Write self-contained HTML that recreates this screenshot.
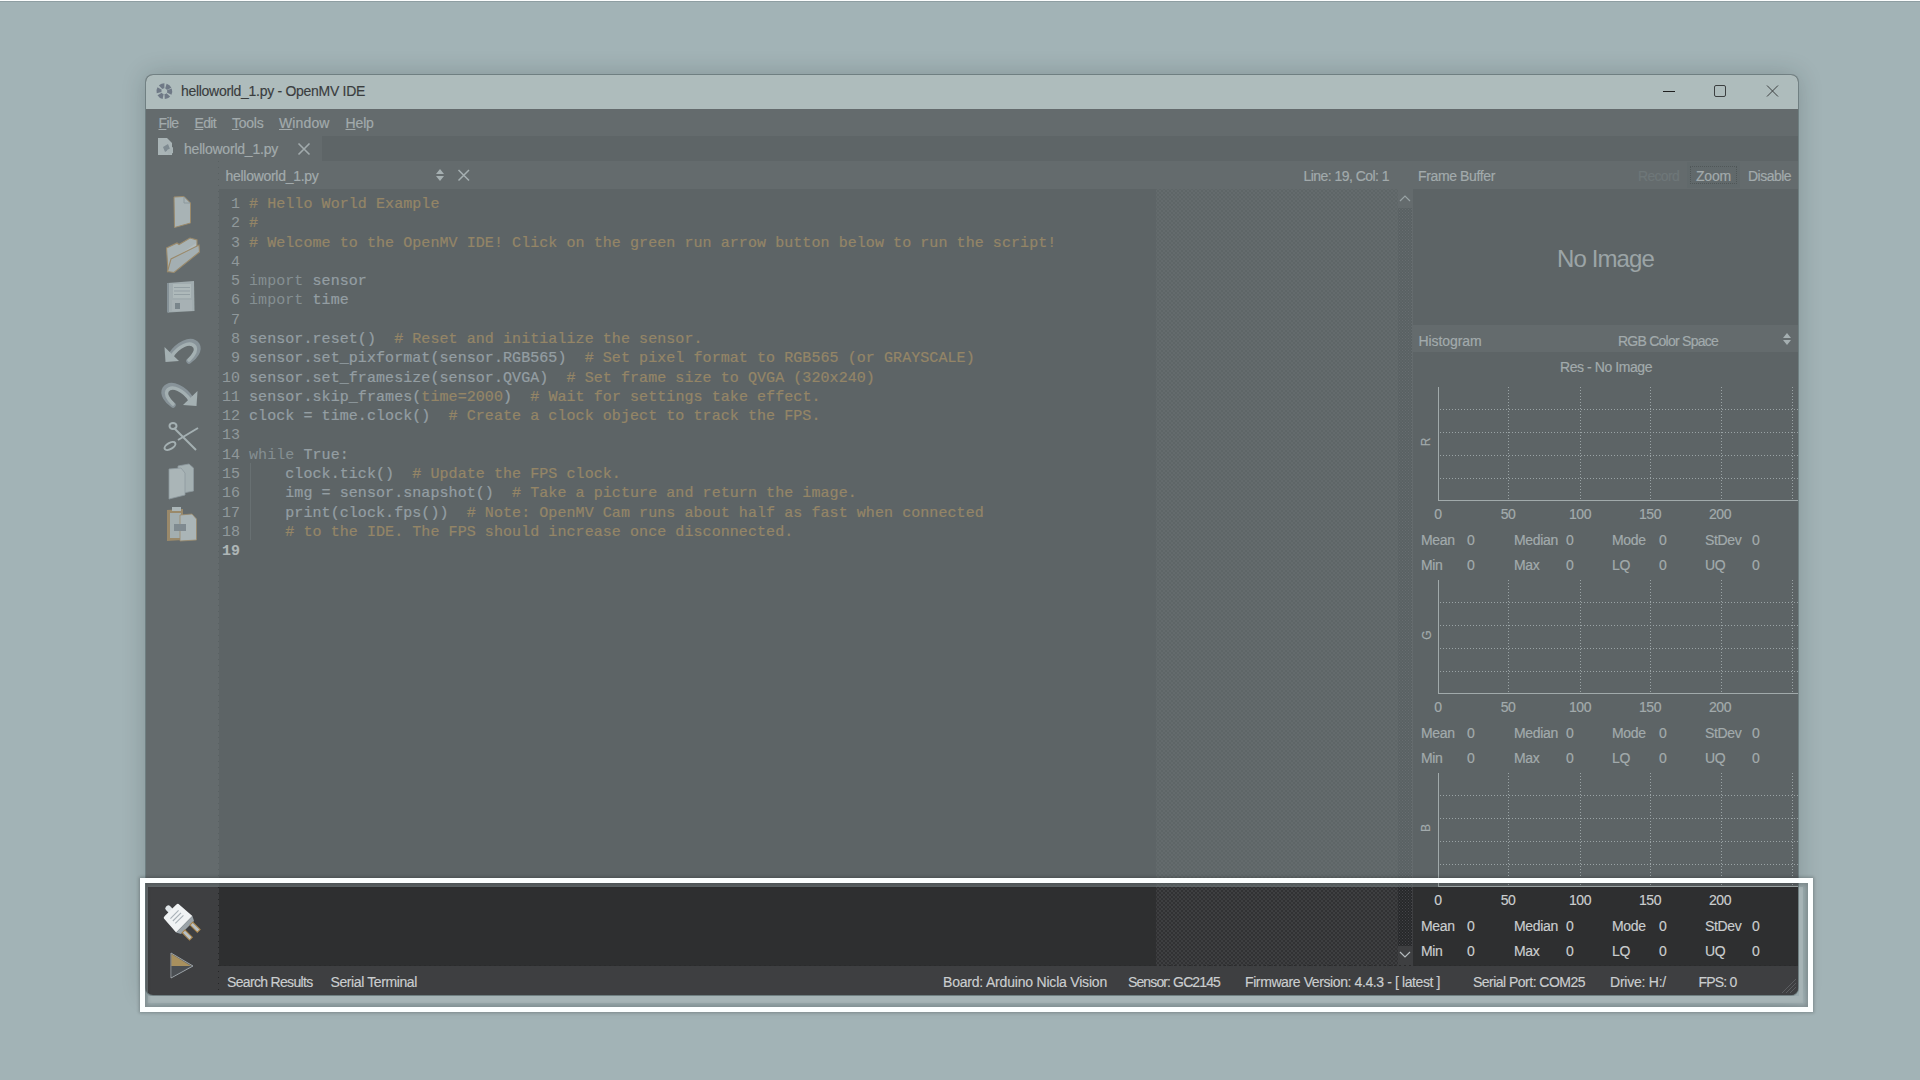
<!DOCTYPE html>
<html><head><meta charset="utf-8">
<style>
*{margin:0;padding:0;box-sizing:border-box}
html,body{width:1920px;height:1080px;overflow:hidden}
body{background:#a2b3b6;font-family:"Liberation Sans",sans-serif;position:relative}
.a{position:absolute}
.t{position:absolute;white-space:pre;line-height:14px;font-size:14px;color:#cbcecf;-webkit-text-stroke:.15px currentColor}
.c{text-align:center}
.dots{background-color:#3e3f41;background-image:radial-gradient(circle,#2a2b2c .6px,transparent .9px),radial-gradient(circle,#2a2b2c .6px,transparent .9px);background-size:4px 4px;background-position:0 0,2px 2px}
.dots2{background-color:#27282a;background-image:radial-gradient(circle,#45464a .6px,transparent .9px),radial-gradient(circle,#45464a .6px,transparent .9px);background-size:3px 3px;background-position:0 0,1.5px 1.5px}
#win{position:absolute;left:146px;top:75px;width:1652px;height:920px;border-radius:7px;background:#3e3f41;box-shadow:0 0 0 1px rgba(70,84,86,.45),0 0 24px rgba(20,30,32,.22)}
.code{position:absolute;left:249px;top:195px;-webkit-text-stroke:.2px currentColor;letter-spacing:.07px;font-family:"Liberation Mono",monospace;font-size:15px;line-height:19.28px;white-space:pre;color:#aab1bb}
.lnum{position:absolute;left:220px;top:195px;width:20px;text-align:right;font-family:"Liberation Mono",monospace;font-size:15px;line-height:19.28px;white-space:pre;color:#a3a5a9}
.cm{color:#ab7a30}
.kw{color:#8a8f95;-webkit-text-stroke:0}
#ovlwrap{left:146px;top:109px;width:1652px;height:886px;overflow:hidden;border-bottom-left-radius:7px;border-bottom-right-radius:7px}
#ovl{left:2px;top:778px;width:1700px;height:200px;box-shadow:0 0 0 3000px rgba(131,142,144,.56)}
#hl{left:140px;top:878px;width:1673px;height:134px;border:5px solid #fcffff;box-shadow:0 0 3px 1px rgba(0,0,0,.22),inset 0 0 4px 2px rgba(0,0,0,.2)}
</style></head><body>
<div class="a" style="left:0;top:0;width:1920px;height:1px;background:#fbfdfd"></div>
<div class="a" style="left:0;top:1px;width:1920px;height:1px;background:#8e9ea2"></div>
<div id="win"></div>
<div class="a" style="left:148px;top:996px;width:1655px;height:7px;background:#a6b4b6"></div>
<div class="a" style="left:1799px;top:887px;width:4px;height:116px;background:#a6b4b6"></div>
<div class="a" style="left:146px;top:75px;width:1652px;height:920px;border-radius:7px;overflow:hidden">
 <div class="a" style="left:0;top:0;width:1652px;height:34px;background:#aebcbc"></div>
 <div class="a" style="left:0;top:34px;width:1652px;height:27px;background:#3e3f41"></div>
 <div class="a" style="left:0;top:61px;width:1652px;height:25px;background:#303132"></div>
 <div class="a" style="left:0;top:61px;width:176px;height:25px;background:#3e3f41"></div>
 <div class="a" style="left:73px;top:891px;width:1579px;height:29px;background:#3e3f41"></div>
</div>
<div class="a" style="left:146px;top:161px;width:73px;height:805px;background:#3e3f41"></div>
<div class="a" style="left:219px;top:161px;width:1194px;height:28px;background:#3e3f41"></div>
<div class="a" style="left:219px;top:189px;width:937px;height:777px;background:#2e2f30"></div>
<div class="a dots" style="left:1156px;top:189px;width:242px;height:777px"></div>
<div class="a" style="left:1398px;top:189px;width:15px;height:777px;background:#3e3f41"></div>
<div class="a dots2" style="left:1398px;top:208px;width:14px;height:738px"></div>
<div class="a" style="left:1413px;top:161px;width:385px;height:28px;background:#3e3f41"></div>
<div class="a" style="left:1687px;top:162px;width:53px;height:26px;background:#38393b"></div>
<div class="a" style="left:1690px;top:166px;width:47px;height:18px;border:1px dotted #111"></div>
<div class="a" style="left:1413px;top:189px;width:385px;height:136px;background:#2e2f30"></div>
<div class="a" style="left:1413px;top:325px;width:385px;height:27px;background:#3e3f41"></div>
<div class="a" style="left:1413px;top:352px;width:385px;height:614px;background:#2e2f30"></div>

<svg class="a" style="left:0;top:0" width="1920" height="1080">
<line x1="1440" y1="409.5" x2="1798" y2="409.5" stroke="#b9bdc0" stroke-dasharray="1 2" />
<line x1="1440" y1="432.5" x2="1798" y2="432.5" stroke="#b9bdc0" stroke-dasharray="1 2" />
<line x1="1440" y1="455.5" x2="1798" y2="455.5" stroke="#b9bdc0" stroke-dasharray="1 2" />
<line x1="1440" y1="478.5" x2="1798" y2="478.5" stroke="#b9bdc0" stroke-dasharray="1 2" />
<line x1="1508.5" y1="387" x2="1508.5" y2="500" stroke="#b9bdc0" stroke-dasharray="1 2" />
<line x1="1580.5" y1="387" x2="1580.5" y2="500" stroke="#b9bdc0" stroke-dasharray="1 2" />
<line x1="1650.5" y1="387" x2="1650.5" y2="500" stroke="#b9bdc0" stroke-dasharray="1 2" />
<line x1="1721.5" y1="387" x2="1721.5" y2="500" stroke="#b9bdc0" stroke-dasharray="1 2" />
<line x1="1792.5" y1="387" x2="1792.5" y2="500" stroke="#b9bdc0" stroke-dasharray="1 2" />
<line x1="1438.5" y1="387" x2="1438.5" y2="501" stroke="#c8cccd" />
<line x1="1438" y1="500.5" x2="1798" y2="500.5" stroke="#c8cccd" />
<line x1="1440" y1="602.5" x2="1798" y2="602.5" stroke="#b9bdc0" stroke-dasharray="1 2" />
<line x1="1440" y1="625.5" x2="1798" y2="625.5" stroke="#b9bdc0" stroke-dasharray="1 2" />
<line x1="1440" y1="648.5" x2="1798" y2="648.5" stroke="#b9bdc0" stroke-dasharray="1 2" />
<line x1="1440" y1="671.5" x2="1798" y2="671.5" stroke="#b9bdc0" stroke-dasharray="1 2" />
<line x1="1508.5" y1="580" x2="1508.5" y2="693" stroke="#b9bdc0" stroke-dasharray="1 2" />
<line x1="1580.5" y1="580" x2="1580.5" y2="693" stroke="#b9bdc0" stroke-dasharray="1 2" />
<line x1="1650.5" y1="580" x2="1650.5" y2="693" stroke="#b9bdc0" stroke-dasharray="1 2" />
<line x1="1721.5" y1="580" x2="1721.5" y2="693" stroke="#b9bdc0" stroke-dasharray="1 2" />
<line x1="1792.5" y1="580" x2="1792.5" y2="693" stroke="#b9bdc0" stroke-dasharray="1 2" />
<line x1="1438.5" y1="580" x2="1438.5" y2="694" stroke="#c8cccd" />
<line x1="1438" y1="693.5" x2="1798" y2="693.5" stroke="#c8cccd" />
<line x1="1440" y1="795.5" x2="1798" y2="795.5" stroke="#b9bdc0" stroke-dasharray="1 2" />
<line x1="1440" y1="818.5" x2="1798" y2="818.5" stroke="#b9bdc0" stroke-dasharray="1 2" />
<line x1="1440" y1="841.5" x2="1798" y2="841.5" stroke="#b9bdc0" stroke-dasharray="1 2" />
<line x1="1440" y1="864.5" x2="1798" y2="864.5" stroke="#b9bdc0" stroke-dasharray="1 2" />
<line x1="1508.5" y1="773" x2="1508.5" y2="886" stroke="#b9bdc0" stroke-dasharray="1 2" />
<line x1="1580.5" y1="773" x2="1580.5" y2="886" stroke="#b9bdc0" stroke-dasharray="1 2" />
<line x1="1650.5" y1="773" x2="1650.5" y2="886" stroke="#b9bdc0" stroke-dasharray="1 2" />
<line x1="1721.5" y1="773" x2="1721.5" y2="886" stroke="#b9bdc0" stroke-dasharray="1 2" />
<line x1="1792.5" y1="773" x2="1792.5" y2="886" stroke="#b9bdc0" stroke-dasharray="1 2" />
<line x1="1438.5" y1="773" x2="1438.5" y2="887" stroke="#c8cccd" />
<line x1="1438" y1="886.5" x2="1798" y2="886.5" stroke="#c8cccd" />
</svg>

<svg class="a" style="left:0;top:0" width="1920" height="1080">
 <!-- title logo (aperture) -->
 <g transform="translate(164.3,91.2) rotate(-20)">
  <circle r="5.4" fill="none" stroke="#6f7986" stroke-width="5" stroke-dasharray="4.2 1.45"/>
 </g>
 <!-- window buttons -->
 <line x1="1663" y1="91.5" x2="1675" y2="91.5" stroke="#1f1f1f" stroke-width="1"/>
 <rect x="1714.5" y="85.5" width="11" height="11" rx="1.5" fill="none" stroke="#3c3f40" stroke-width="1"/>
 <path d="M1767 85.5 L1778 96.5 M1778 85.5 L1767 96.5" stroke="#3c3f40" stroke-width="1"/>
 <!-- tab icon: python doc -->
 <path d="M158 138 L167 138 L172 143 L172 155 L158 155 Z" fill="#dbe4e7"/>
 <path d="M163 147 L168 144 L170 149 L165 152 Z" fill="#7c8794"/>
 <path d="M167 150 L173 147 L173 153 L168 155 Z" fill="#d3dcdf"/>
 <!-- tab close -->
 <path d="M298.5 143.5 L309.5 154.5 M309.5 143.5 L298.5 154.5" stroke="#c9cdd0" stroke-width="1.6"/>
 <!-- header arrows -->
 <path d="M436 174 L440 169 L444 174 Z M436 176 L444 176 L440 181 Z" fill="#d2d8da"/>
 <path d="M458.5 170 L469 180.5 M469 170 L458.5 180.5" stroke="#d2d8da" stroke-width="1.5"/>
 <!-- combobox arrows -->
 <path d="M1783 338 L1787 333 L1791 338 Z M1783 340 L1791 340 L1787 345 Z" fill="#d2d8da"/>
 <!-- scroll arrows -->
 <path d="M1400 201 L1405 196 L1410 201" fill="none" stroke="#b6bcbf" stroke-width="1.2"/>
 <path d="M1400 952 L1405 957 L1410 952" fill="none" stroke="#b6bcbf" stroke-width="1.2"/>

 <!-- new file -->
 <path d="M174 197 L184 196.5 L190.5 203 L190.5 223 L174.5 227.5 Z" fill="#d8e2e4" stroke="#b8823a" stroke-width="1"/>
 <path d="M184 197 L184 203 L190 203" fill="none" stroke="#9aa4ae" stroke-width="1"/>
 <!-- open folder -->
 <path d="M166.5 248 L177 243 L179 244.5 L190 238 L197 240 L197 246 L168 271.5 Z" fill="#d8e2e4" stroke="#b8823a" stroke-width="1.1"/>
 <path d="M170 262 L196 243 L196 249 L172 266 Z" fill="#eef3f4"/>
 <path d="M167.5 271.5 L171 259 L199 245 L199.5 252 L174 272.5 Z" fill="#cfd9dc" stroke="#b8823a" stroke-width="1.1"/>
 <!-- floppy -->
 <path d="M168 283 L194 281 L194.5 311 L168 312.5 Z" fill="#c8d2d5"/>
 <path d="M168 283 L168 312.5" stroke="#8c97a2" stroke-width="2"/>
 <rect x="173" y="284" width="18" height="14" fill="#e6eef0"/>
 <path d="M174 287.5 H190 M174 291 H190 M174 294.5 H190" stroke="#a9b3ba" stroke-width="1"/>
 <rect x="172" y="300" width="20" height="11" fill="#d6dee1"/>
 <rect x="175" y="303" width="5" height="6" fill="#6f7985"/>
 <!-- undo -->
 <g id="undo">
  <path d="M171 355 C177 345 191 337 197 345 C200 350 195 357 189 361" fill="none" stroke="#8f9aa5" stroke-width="5.5" stroke-linecap="round"/>
  <path d="M172 356 C178 347 190 340 195 347 C197 351 193 356 189 360" fill="none" stroke="#d0dadd" stroke-width="3.5" stroke-linecap="round"/>
  <path d="M164.5 347 L165.5 362 L179 361 Z" fill="#d0dadd"/>
 </g>
 <!-- redo -->
 <g transform="translate(362,44) scale(-1,1)">
  <path d="M171 355 C177 345 191 337 197 345 C200 350 195 357 189 361" fill="none" stroke="#8f9aa5" stroke-width="5.5" stroke-linecap="round"/>
  <path d="M172 356 C178 347 190 340 195 347 C197 351 193 356 189 360" fill="none" stroke="#d0dadd" stroke-width="3.5" stroke-linecap="round"/>
  <path d="M164.5 347 L165.5 362 L179 361 Z" fill="#d0dadd"/>
 </g>
 <!-- scissors -->
 <g fill="none" stroke="#d0dadd" stroke-width="2">
  <path d="M178 440 L198 428"/>
  <path d="M174 428 L196 450"/>
  <ellipse cx="173" cy="426" rx="3.5" ry="3" />
  <ellipse cx="170" cy="446" rx="6" ry="3" transform="rotate(-30 170 446)"/>
 </g>
 <!-- copy -->
 <path d="M178 466 L189 464 L193.5 468 L193.5 491 L178 494 Z" fill="#d0dadd" stroke="#9ba5af" stroke-width=".8"/>
 <path d="M169 469 L181 468 L185 473 L185 495 L169 499 Z" fill="#dde6e8" stroke="#9ba5af" stroke-width=".8"/>
 <!-- paste -->
 <path d="M167 510 L183 509 L183 540 L167 541 Z" fill="#b8823a"/>
 <rect x="170" y="513" width="11" height="25" fill="#cdd6d9"/>
 <rect x="172" y="507" width="9" height="4" fill="#dde6e8"/>
 <path d="M180 515 L192 514 L196.5 519 L196.5 540 L180 541 Z" fill="#dde6e8" stroke="#b8823a" stroke-width=".8"/>
 <rect x="174" y="524" width="12" height="7" fill="#7b8590"/>

 <!-- plug -->
 <g transform="translate(181,921) rotate(-45) scale(1.15)">
  <rect x="-2.5" y="-18" width="5" height="7" rx="2" fill="#dfe5e8"/>
  <path d="M-9 -12 Q-9 -13 -7 -13 L7 -13 Q9 -13 9 -12 L10 4 L-10 4 Z" fill="#f0f3f4"/>
  <path d="M-10 4 L10 4 L8 8 L-8 8 Z" fill="#9aa3a8"/>
  <path d="M-5 -8 H5 M-5 -5 H5 M-5 -2 H5" stroke="#a9b2b8" stroke-width="1"/>
  <rect x="-6.5" y="8" width="3.4" height="9" fill="#b9c1c5" stroke="#a98449" stroke-width=".9"/>
  <rect x="3.1" y="8" width="3.4" height="9" fill="#b9c1c5" stroke="#a98449" stroke-width=".9"/>
 </g>
 <!-- run -->
 <path d="M171 953 L193 966 L171 978 Z" fill="#5a5e62" stroke="#9aa1a6" stroke-width="1"/>
 <path d="M171.5 954 L191 966 L171.5 966 Z" fill="#a8905e"/>
 <path d="M171.5 966 L191 966 L171.5 977 Z" fill="#4a4e52"/>

 <!-- indentation guide -->
 <line x1="250.5" y1="463" x2="250.5" y2="540" stroke="#48494c" stroke-width="1"/>
 <!-- dotted separators -->
 <line x1="218.5" y1="161" x2="218.5" y2="995" stroke="#262728" stroke-width="1" stroke-dasharray="1 5"/>
 <line x1="219" y1="965.5" x2="1798" y2="965.5" stroke="#2a2b2c" stroke-width="1" stroke-dasharray="2 3"/>
 <!-- size grip -->
 <path d="M1786 993 L1796 983 M1790 993 L1796 987 M1782 993 L1796 979" stroke="#5a5c5f" stroke-width="1"/>
</svg>


<div class="t" style="left:181px;top:84px;font-size:14px;line-height:14px;letter-spacing:-0.293px;color:#3a3d3e">helloworld_1.py - OpenMV IDE</div>
<div class="t" style="left:158.5px;top:116px;font-size:14px;line-height:14px;letter-spacing:-0.641px"><u>F</u>ile</div>
<div class="t" style="left:194.5px;top:116px;font-size:14px;line-height:14px;letter-spacing:-0.656px"><u>E</u>dit</div>
<div class="t" style="left:232px;top:116px;font-size:14px;line-height:14px;letter-spacing:-0.237px"><u>T</u>ools</div>
<div class="t" style="left:279px;top:116px;font-size:14px;line-height:14px;letter-spacing:0.117px"><u>W</u>indow</div>
<div class="t" style="left:345.5px;top:116px;font-size:14px;line-height:14px;letter-spacing:-0.137px"><u>H</u>elp</div>
<div class="t" style="left:184px;top:142px;font-size:14px;line-height:14px;letter-spacing:-0.22px">helloworld_1.py</div>
<div class="t" style="left:225.5px;top:169px;font-size:14px;line-height:14px;letter-spacing:-0.286px">helloworld_1.py</div>
<div class="t" style="left:1303.5px;top:169px;font-size:14px;line-height:14px;letter-spacing:-0.542px">Line: 19, Col: 1</div>
<div class="t" style="left:1418px;top:169px;font-size:14px;line-height:14px;letter-spacing:-0.37px">Frame Buffer</div>
<div class="t" style="left:1638px;top:169px;font-size:14px;line-height:14px;letter-spacing:-0.69px;color:#56595b">Record</div>
<div class="t" style="left:1696px;top:169px;font-size:14px;line-height:14px;letter-spacing:-0.199px">Zoom</div>
<div class="t" style="left:1748px;top:169px;font-size:14px;line-height:14px;letter-spacing:-0.529px">Disable</div>
<div class="t" style="left:1557px;top:247px;font-size:24px;line-height:24px;letter-spacing:-0.883px;color:#bcc0c2;-webkit-text-stroke:0">No Image</div>
<div class="t" style="left:1418.5px;top:334px;font-size:14px;line-height:14px;letter-spacing:-0.089px">Histogram</div>
<div class="t" style="left:1618px;top:334px;font-size:14px;line-height:14px;letter-spacing:-0.752px">RGB Color Space</div>
<div class="t" style="left:1560px;top:360px;font-size:14px;line-height:14px;letter-spacing:-0.432px">Res - No Image</div>
<div class="t" style="left:227px;top:975px;font-size:14px;line-height:14px;letter-spacing:-0.674px">Search Results</div>
<div class="t" style="left:330.5px;top:975px;font-size:14px;line-height:14px;letter-spacing:-0.39px">Serial Terminal</div>
<div class="t" style="left:943px;top:975px;font-size:14px;line-height:14px;letter-spacing:-0.2px">Board: Arduino Nicla Vision</div>
<div class="t" style="left:1128px;top:975px;font-size:14px;line-height:14px;letter-spacing:-0.878px">Sensor: GC2145</div>
<div class="t" style="left:1245px;top:975px;font-size:14px;line-height:14px;letter-spacing:-0.397px">Firmware Version: 4.4.3 - [ latest ]</div>
<div class="t" style="left:1473px;top:975px;font-size:14px;line-height:14px;letter-spacing:-0.521px">Serial Port: COM25</div>
<div class="t" style="left:1610px;top:975px;font-size:14px;line-height:14px;letter-spacing:-0.234px">Drive: H:/</div>
<div class="t" style="left:1698.5px;top:975px;font-size:14px;line-height:14px;letter-spacing:-0.8px">FPS: 0</div>
<div class="t c" style="left:1408px;top:507px;width:60px;letter-spacing:-.5px">0</div>
<div class="t c" style="left:1478px;top:507px;width:60px;letter-spacing:-.5px">50</div>
<div class="t c" style="left:1550px;top:507px;width:60px;letter-spacing:-.5px">100</div>
<div class="t c" style="left:1620px;top:507px;width:60px;letter-spacing:-.5px">150</div>
<div class="t c" style="left:1690px;top:507px;width:60px;letter-spacing:-.5px">200</div>
<div class="t" style="left:1422px;top:436px;font-size:12px;line-height:12px;transform:rotate(-90deg);transform-origin:center">R</div>
<div class="t" style="left:1421px;top:533px;letter-spacing:-.35px">Mean</div>
<div class="t" style="left:1467px;top:533px">0</div>
<div class="t" style="left:1514px;top:533px;letter-spacing:-.35px">Median</div>
<div class="t" style="left:1566px;top:533px">0</div>
<div class="t" style="left:1612px;top:533px;letter-spacing:-.35px">Mode</div>
<div class="t" style="left:1659px;top:533px">0</div>
<div class="t" style="left:1705px;top:533px;letter-spacing:-.35px">StDev</div>
<div class="t" style="left:1752px;top:533px">0</div>
<div class="t" style="left:1421px;top:558px;letter-spacing:-.35px">Min</div>
<div class="t" style="left:1467px;top:558px">0</div>
<div class="t" style="left:1514px;top:558px;letter-spacing:-.35px">Max</div>
<div class="t" style="left:1566px;top:558px">0</div>
<div class="t" style="left:1612px;top:558px;letter-spacing:-.35px">LQ</div>
<div class="t" style="left:1659px;top:558px">0</div>
<div class="t" style="left:1705px;top:558px;letter-spacing:-.35px">UQ</div>
<div class="t" style="left:1752px;top:558px">0</div>
<div class="t c" style="left:1408px;top:700px;width:60px;letter-spacing:-.5px">0</div>
<div class="t c" style="left:1478px;top:700px;width:60px;letter-spacing:-.5px">50</div>
<div class="t c" style="left:1550px;top:700px;width:60px;letter-spacing:-.5px">100</div>
<div class="t c" style="left:1620px;top:700px;width:60px;letter-spacing:-.5px">150</div>
<div class="t c" style="left:1690px;top:700px;width:60px;letter-spacing:-.5px">200</div>
<div class="t" style="left:1422px;top:629px;font-size:12px;line-height:12px;transform:rotate(-90deg);transform-origin:center">G</div>
<div class="t" style="left:1421px;top:726px;letter-spacing:-.35px">Mean</div>
<div class="t" style="left:1467px;top:726px">0</div>
<div class="t" style="left:1514px;top:726px;letter-spacing:-.35px">Median</div>
<div class="t" style="left:1566px;top:726px">0</div>
<div class="t" style="left:1612px;top:726px;letter-spacing:-.35px">Mode</div>
<div class="t" style="left:1659px;top:726px">0</div>
<div class="t" style="left:1705px;top:726px;letter-spacing:-.35px">StDev</div>
<div class="t" style="left:1752px;top:726px">0</div>
<div class="t" style="left:1421px;top:751px;letter-spacing:-.35px">Min</div>
<div class="t" style="left:1467px;top:751px">0</div>
<div class="t" style="left:1514px;top:751px;letter-spacing:-.35px">Max</div>
<div class="t" style="left:1566px;top:751px">0</div>
<div class="t" style="left:1612px;top:751px;letter-spacing:-.35px">LQ</div>
<div class="t" style="left:1659px;top:751px">0</div>
<div class="t" style="left:1705px;top:751px;letter-spacing:-.35px">UQ</div>
<div class="t" style="left:1752px;top:751px">0</div>
<div class="t c" style="left:1408px;top:893px;width:60px;letter-spacing:-.5px">0</div>
<div class="t c" style="left:1478px;top:893px;width:60px;letter-spacing:-.5px">50</div>
<div class="t c" style="left:1550px;top:893px;width:60px;letter-spacing:-.5px">100</div>
<div class="t c" style="left:1620px;top:893px;width:60px;letter-spacing:-.5px">150</div>
<div class="t c" style="left:1690px;top:893px;width:60px;letter-spacing:-.5px">200</div>
<div class="t" style="left:1422px;top:822px;font-size:12px;line-height:12px;transform:rotate(-90deg);transform-origin:center">B</div>
<div class="t" style="left:1421px;top:919px;letter-spacing:-.35px">Mean</div>
<div class="t" style="left:1467px;top:919px">0</div>
<div class="t" style="left:1514px;top:919px;letter-spacing:-.35px">Median</div>
<div class="t" style="left:1566px;top:919px">0</div>
<div class="t" style="left:1612px;top:919px;letter-spacing:-.35px">Mode</div>
<div class="t" style="left:1659px;top:919px">0</div>
<div class="t" style="left:1705px;top:919px;letter-spacing:-.35px">StDev</div>
<div class="t" style="left:1752px;top:919px">0</div>
<div class="t" style="left:1421px;top:944px;letter-spacing:-.35px">Min</div>
<div class="t" style="left:1467px;top:944px">0</div>
<div class="t" style="left:1514px;top:944px;letter-spacing:-.35px">Max</div>
<div class="t" style="left:1566px;top:944px">0</div>
<div class="t" style="left:1612px;top:944px;letter-spacing:-.35px">LQ</div>
<div class="t" style="left:1659px;top:944px">0</div>
<div class="t" style="left:1705px;top:944px;letter-spacing:-.35px">UQ</div>
<div class="t" style="left:1752px;top:944px">0</div>

<div class="lnum">1
2
3
4
5
6
7
8
9
10
11
12
13
14
15
16
17
18
<b style="color:#e6e8e9">19</b></div>
<div class="code"><span class="cm"># Hello World Example</span>
<span class="cm">#</span>
<span class="cm"># Welcome to the OpenMV IDE! Click on the green run arrow button below to run the script!</span>

<span class="kw">import</span> sensor
<span class="kw">import</span> time

sensor.reset()  <span class="cm"># Reset and initialize the sensor.</span>
sensor.set_pixformat(sensor.RGB565)  <span class="cm"># Set pixel format to RGB565 (or GRAYSCALE)</span>
sensor.set_framesize(sensor.QVGA)  <span class="cm"># Set frame size to QVGA (320x240)</span>
sensor.skip_frames(<span class="cm">time=2000</span>)  <span class="cm"># Wait for settings take effect.</span>
clock = time.clock()  <span class="cm"># Create a clock object to track the FPS.</span>

<span class="kw">while</span> True:
    clock.tick()  <span class="cm"># Update the FPS clock.</span>
    img = sensor.snapshot()  <span class="cm"># Take a picture and return the image.</span>
    print(clock.fps())  <span class="cm"># Note: OpenMV Cam runs about half as fast when connected</span>
    <span class="cm"># to the IDE. The FPS should increase once disconnected.</span>
</div>

<div id="ovlwrap" class="a"><div id="ovl" class="a"></div></div>
<div id="hl" class="a"></div>
</body></html>
